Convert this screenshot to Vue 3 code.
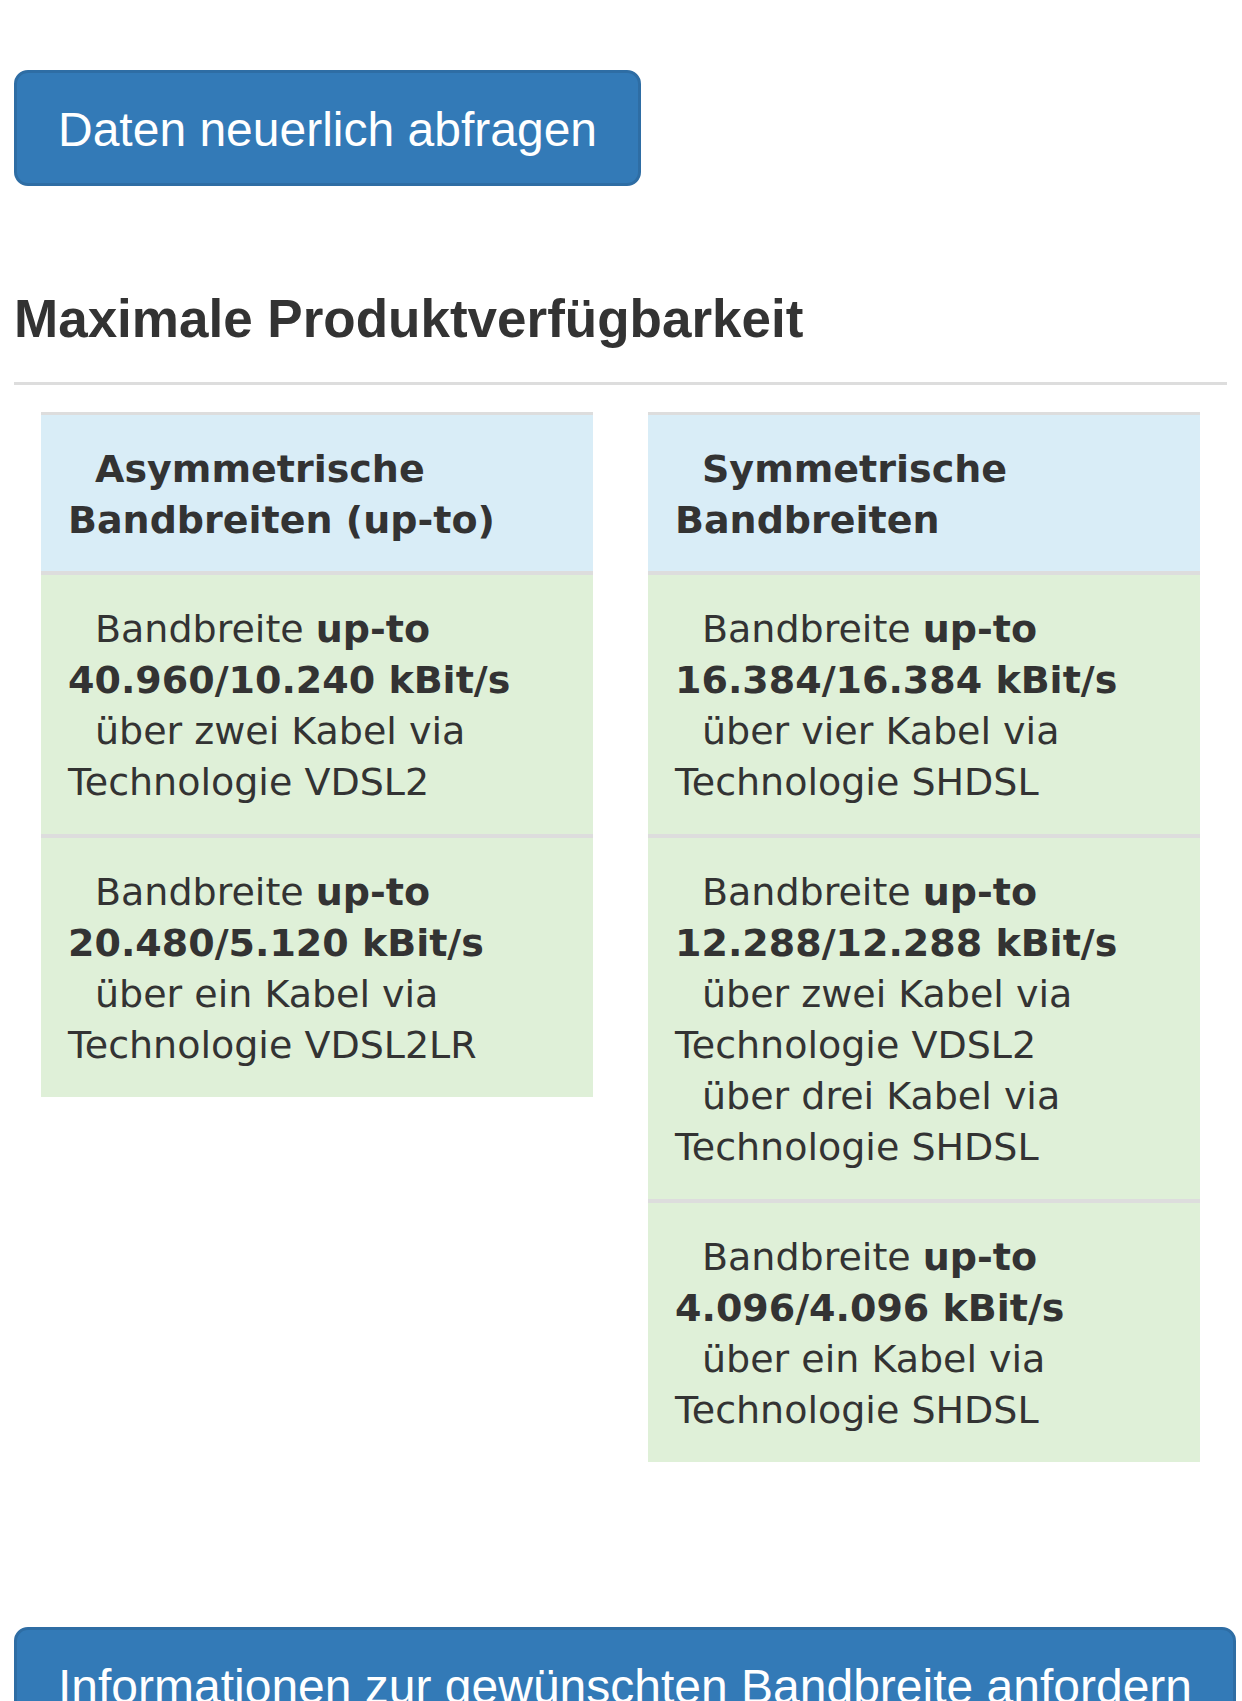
<script setup>
const tables = [
  {
    title: 'Asymmetrische Bandbreiten (up-to)',
    rows: [
      { rate: '40.960/10.240', via: ['über zwei Kabel via Technologie VDSL2'] },
      { rate: '20.480/5.120', via: ['über ein Kabel via Technologie VDSL2LR'] },
    ],
  },
  {
    title: 'Symmetrische Bandbreiten',
    rows: [
      { rate: '16.384/16.384', via: ['über vier Kabel via Technologie SHDSL'] },
      {
        rate: '12.288/12.288',
        via: ['über zwei Kabel via Technologie VDSL2', 'über drei Kabel via Technologie SHDSL'],
      },
      { rate: '4.096/4.096', via: ['über ein Kabel via Technologie SHDSL'] },
    ],
  },
]
</script>

<template>
  <main class="page">
    <button type="button" class="btn">Daten neuerlich abfragen</button>
    <h1 class="heading">Maximale Produktverfügbarkeit</h1>
    <div class="columns">
      <table v-for="table in tables" :key="table.title" class="rates">
        <thead>
          <tr>
            <th scope="col"><p>{{ table.title }}</p></th>
          </tr>
        </thead>
        <tbody>
          <tr v-for="row in table.rows" :key="row.rate">
            <td>
              <p>Bandbreite <b>up-to {{ row.rate }} kBit/s</b></p>
              <p v-for="line in row.via" :key="line">{{ line }}</p>
            </td>
          </tr>
        </tbody>
      </table>
    </div>
    <button type="button" class="btn">Informationen zur gewünschten Bandbreite anfordern</button>
  </main>
</template>

<style>
body {
  margin: 0;
  background: #fff;
}
</style>

<style scoped>
.page {
  box-sizing: border-box;
  height: 100vh;
  overflow: auto;
  scrollbar-width: none;
  padding: 70px 15px 0 14px;
  color: #333;
  font-family: "Helvetica Neue", "Liberation Sans", Arial, sans-serif;
}

.btn {
  display: block;
  box-sizing: border-box;
  padding: 23px 41px 19px;
  border: 3px solid #2e6da4;
  border-radius: 14px;
  background: #337ab7;
  color: #fff;
  font-family: inherit;
  font-size: 48px;
  line-height: 68px;
  white-space: nowrap;
  cursor: pointer;
}

.heading {
  margin: 103px 0 0;
  padding-bottom: 33px;
  border-bottom: 3px solid #ddd;
  font-size: 53px;
  font-weight: 700;
  line-height: 60px;
}

.columns {
  display: grid;
  grid-template-columns: 1fr 1fr;
  gap: 55px;
  align-items: start;
  padding: 27px 27px 0;
  margin-bottom: 165px;
}

.rates {
  width: 100%;
  table-layout: fixed;
  border-collapse: separate;
  border-spacing: 0;
  font-family: Verdana, "DejaVu Sans", sans-serif;
  font-size: 38px;
  line-height: 51px;
  text-align: left;
}

.rates th {
  padding: 29px 27px 25px;
  border-top: 3px solid #ddd;
  background: #d9edf7;
  font-weight: 700;
}

.rates td {
  padding: 29px 27px 26px;
  border-top: 4px solid #ddd;
  background: #dff0d8;
}

.rates p {
  margin: 0;
  text-indent: 27px;
}
</style>
